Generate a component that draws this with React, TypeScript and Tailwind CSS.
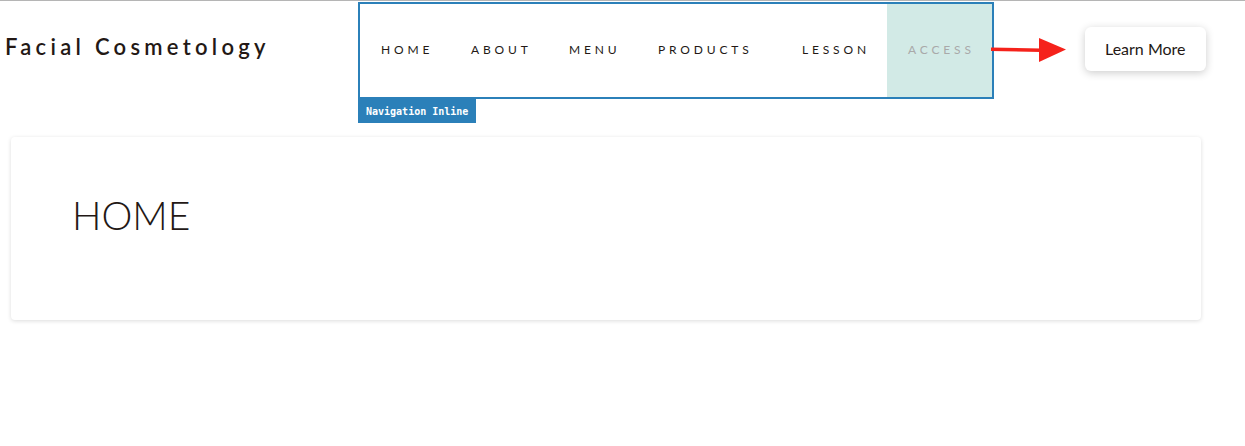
import React from 'react';

const navItems = [
  { label: 'HOME', w: 'w-[90px]' },
  { label: 'ABOUT', w: 'w-[98px]' },
  { label: 'MENU', w: 'w-[89px]' },
  { label: 'PRODUCTS', w: 'w-[144px]' },
  { label: 'LESSON', w: 'w-[106px]' },
  { label: 'ACCESS', w: 'w-[105px]' },
];

const Arrow: React.FC = () => (
  <svg width="76" height="26" viewBox="0 0 76 26" className="block">
    <path d="M0 12.2 L50 13.2" stroke="#f5221b" strokeWidth="3.4" fill="none" />
    <polygon points="48,1 75,12.5 48,25" fill="#f5221b" />
  </svg>
);

export default function App() {
  return (
    <div className="min-h-[446px] w-full bg-white border-t border-[#b5b5b5] font-['Lato',sans-serif] text-[#231815]">
      <header className="flex items-start">
        <div className="w-[358px] h-[97px] flex items-center pl-[5px] pb-[5px]">
          <span className="text-[22px] font-semibold tracking-[0.195em] leading-none">Facial Cosmetology</span>
        </div>

        <div className="flex flex-col items-start">
          <nav className="mt-px h-[97px] border-2 border-[#2b80b9] flex items-stretch">
            {navItems.map(({ label, w }) => {
              const active = label === 'ACCESS';
              return (
                <a
                  key={label}
                  className={
                    active
                      ? `${w} flex items-center pl-[21px] pb-[2px] bg-[#d2eae6] text-[#a9a9a9] text-[12px] tracking-[0.32em]`
                      : `${w} flex items-center pl-[21px] pb-[2px] text-[12px] tracking-[0.32em]`
                  }
                >
                  {label}
                </a>
              );
            })}
          </nav>
          <div className="bg-[#2b80b9] text-white font-['DejaVu_Sans_Mono',monospace] font-bold text-[10px] h-[24px] px-[8px] flex items-center">
            Navigation Inline
          </div>
        </div>

        <div className="mt-[36px] ml-[-3px]">
          <Arrow />
        </div>

        <button className="ml-[18px] mt-[26px] h-[44px] px-[20px] rounded-md bg-white shadow-[0_2px_8px_rgba(0,0,0,0.2)] text-[16px] text-[#231815]">
          Learn More
        </button>
      </header>

      <section className="ml-[11px] mt-[14px] w-[1190px] h-[183px] rounded bg-white shadow-[0_1px_4px_rgba(0,0,0,0.14)] pl-[61px] pt-[59px]">
        <h1 className="text-[39px] font-light leading-none">HOME</h1>
      </section>
    </div>
  );
}
